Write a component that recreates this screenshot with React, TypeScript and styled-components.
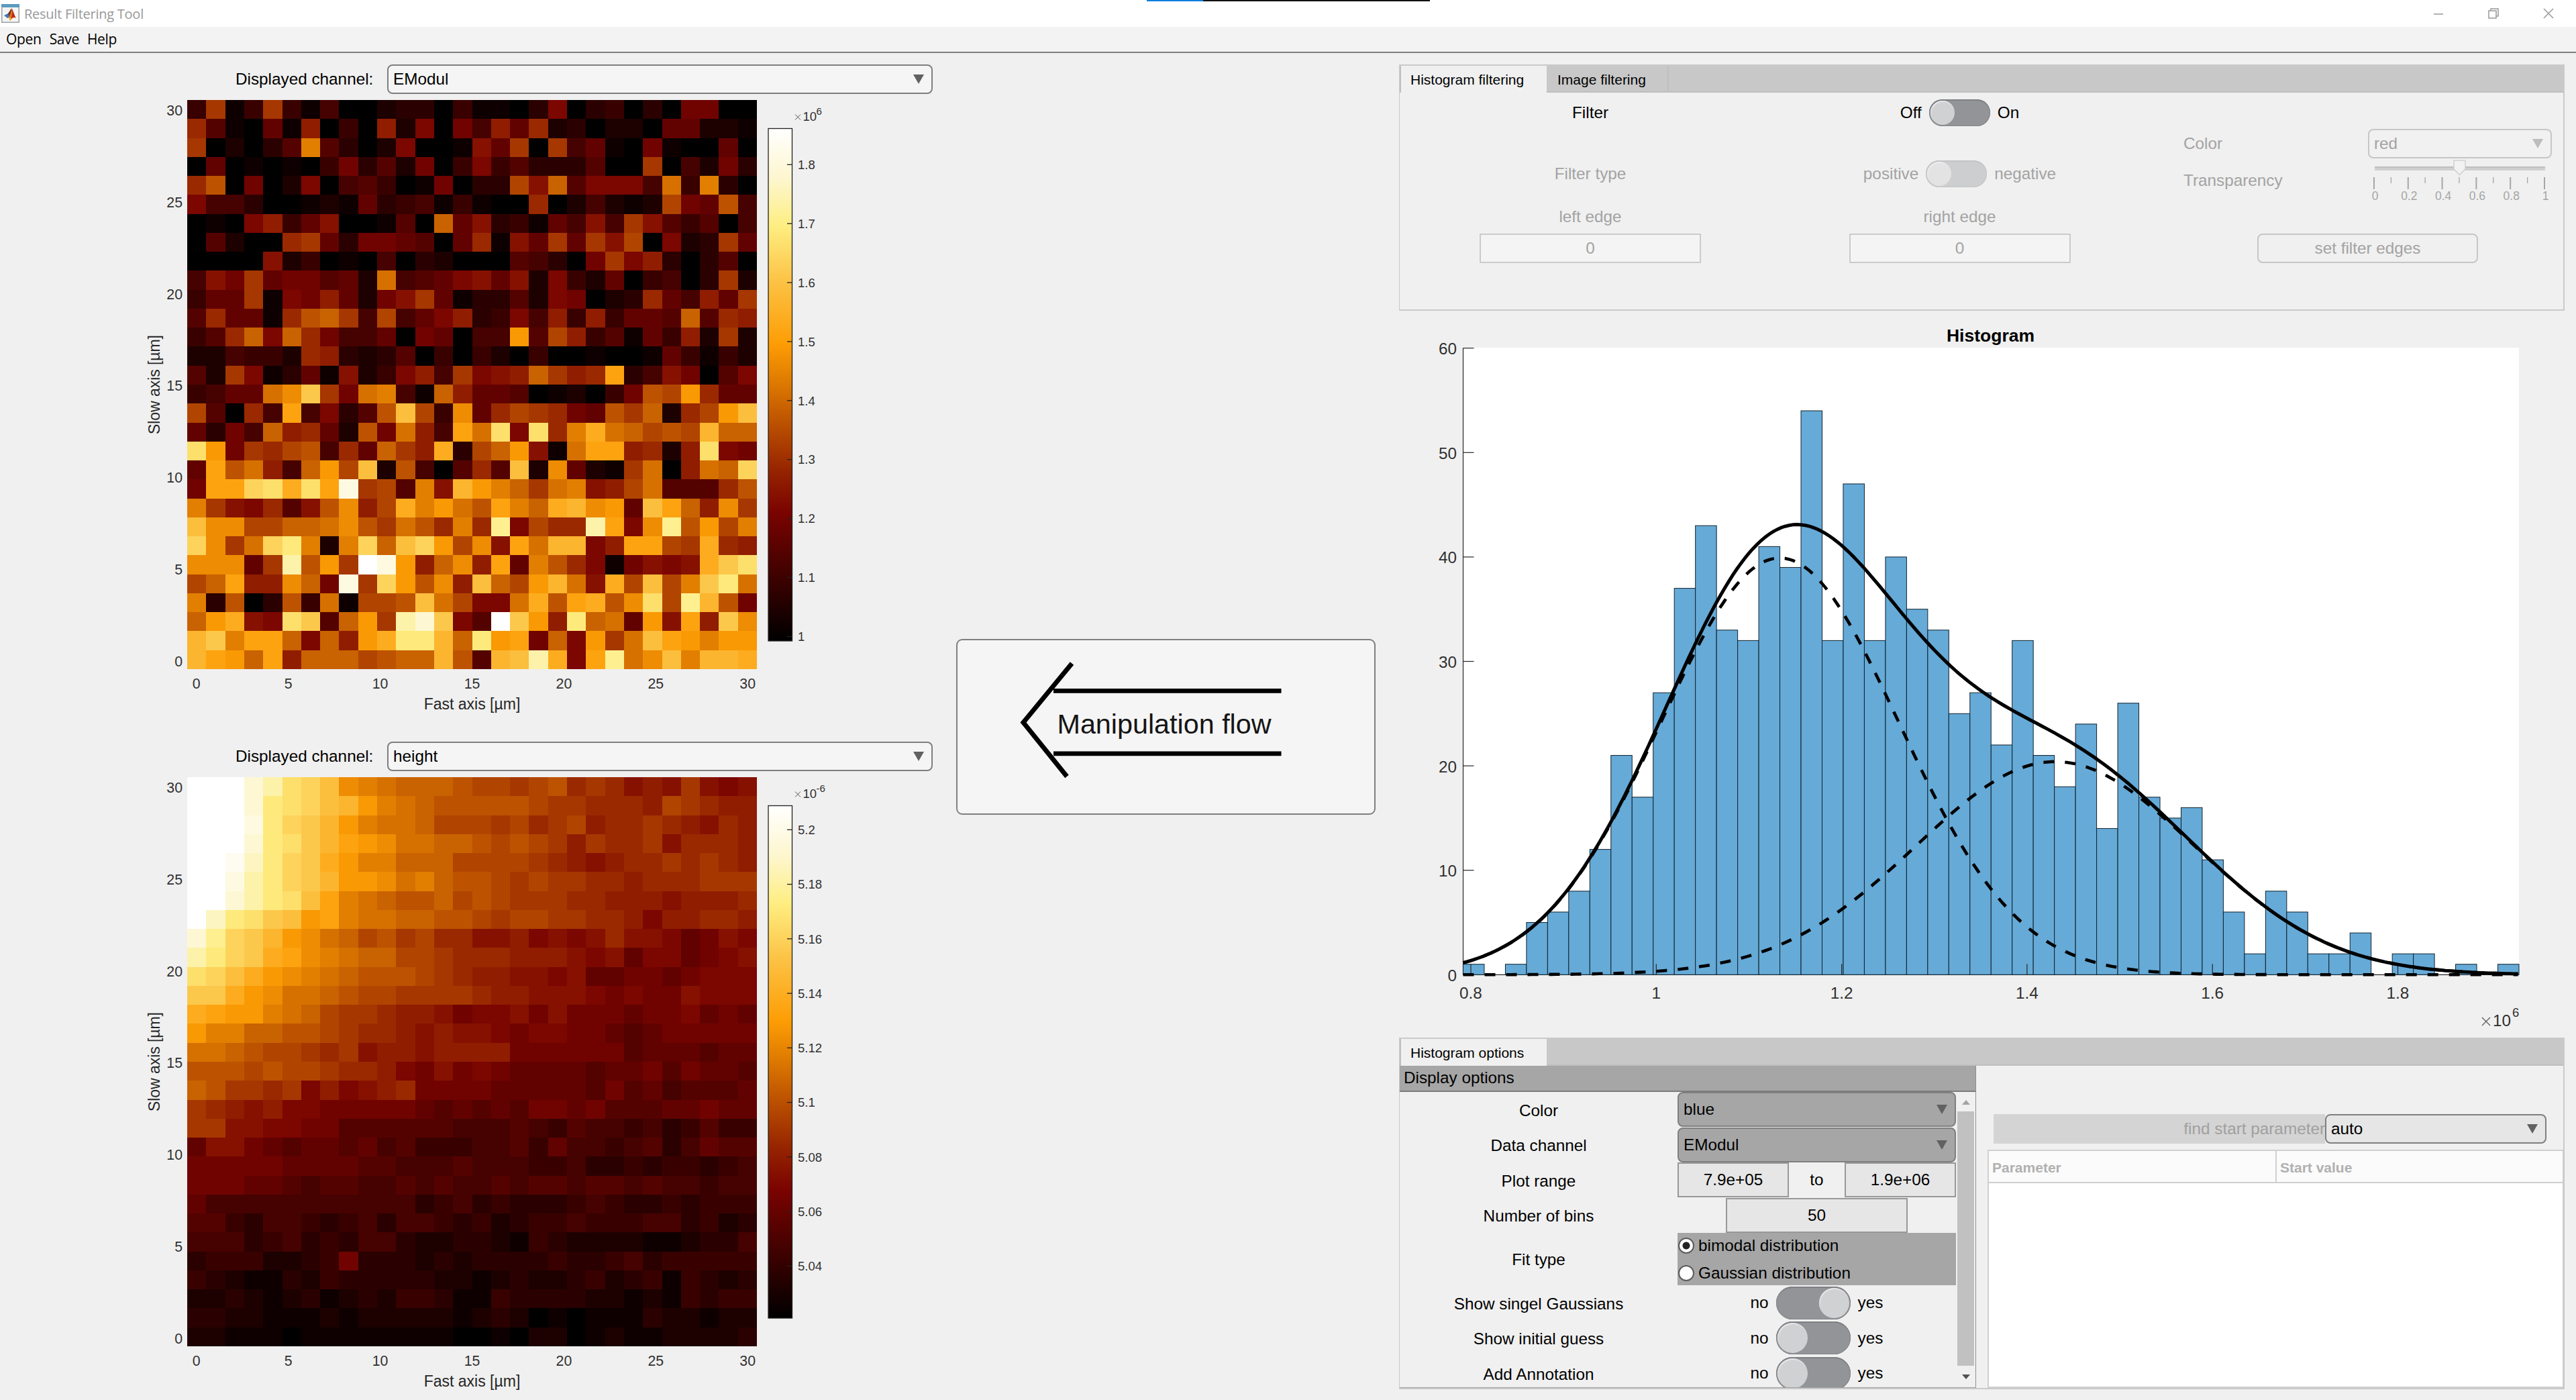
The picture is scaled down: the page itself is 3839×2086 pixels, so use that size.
import React from "react";
import styled, { createGlobalStyle } from "styled-components";

const SANS = '"Liberation Sans", Arial, Helvetica, sans-serif';
const SYSTEM = '"Open Sans", "Noto Sans", sans-serif';

const GlobalStyle = createGlobalStyle`
  * { box-sizing: border-box; }
  body { margin: 0; background: #f0f0f0; overflow: hidden; }
`;

/* ---------- data ---------- */

const EMODUL = [
  "4d14d4150023304110390340308800",
  "c61071b040b29085b7c23022077221",
  "d02036i63029001a7d0d5710810070",
  "070101048362804946333600d05283",
  "cf080290564018033eag69995h4i30",
  "955300121734514100c025212e87f5",
  "0109b47a00160g7a34175a5da64605",
  "06200cd73887607c1a7d7dae0923d7",
  "0000a24010503200065308d9b30360",
  "5a8d788672h5679a7a2942704503d2",
  "477d198b728ad71336298023c75b7d",
  "6c771cfgd5e579b3495b4b4776g6cb",
  "46cg9gc8557087055k6eb46174b2d2",
  "225442cb3236040420400100174142",
  "62d91371a249b5d9abgdbcl35a8069",
  "4577hjpd8hi51gb776012048fekc77",
  "e60c5l5936foe4j7cedc87fdg2ceko",
  "7385gbc72f8hb5lhr9rcimhgefengg",
  "rk8dcef5c7gdbm3egka1hllbc2br98",
  "7lfhb5gkeo2f506c6o2j721dh0bhgq",
  "8llqrmrlxde6iankigdhiabeh666cf",
  "ida9c6afjbemikhfligmnjk7olgbjd",
  "ojjeegghjfdhfcict9eccul9jtfkei",
  "qjdhqsi2iqgoqkejalhnn9blledmcb",
  "jjj7dufkdzxkbgjbl7ifc918a9ampr",
  "eglbbjg8xdqkfjbogeknhameoeipsh",
  "i3f03f4h1eefohe99hmflmfjretnf8",
  "gkma9rp6gkduwp96zpkbsgh7kalbpj",
  "npillg9gbkmssngskl8g9kdholkikk",
  "nlkglbgggefggnf6noum9lthjoinnm",
];

const HEIGHT = [
  "zzzwurqojihgggfeedefcdcabada9a",
  "zzzwsrqonkihgfffffeddcccbedcbb",
  "zzzxsqpnkihhgeeedecdebccdcbacb",
  "zzzwsrpnlkjhhggfefedbdccdacccb",
  "zzyvsqpmkiigggeeeedcbabccdcdcb",
  "zzxusqpnkkjhigffededdccbcccddd",
  "zzwusrolihgffgefedddccbbbabbbc",
  "zvsrpoklihhggffedeeddccb9bbccb",
  "wtqpnkjhgefdeccaab9a9acaa978a9",
  "usqpmljihggeedcccbbba9a799789a",
  "rqomkjihgfffedcbbaa9a778878999",
  "ppmkjhhgfeeddddcbbaaa98988a999",
  "mlkkihgeddcbba899a8a8887889787",
  "kiiggffedccbabaa98998876788888",
  "hhgfeedcdabbabbbb8888886777677",
  "fffefeedccb98a8987777677868776",
  "gfddcd9b9abc888877777686756667",
  "dcbab9988888767676887866677877",
  "ddaa99886666665556546554534644",
  "7aa876776756444556475545635766",
  "888887777665556555445334344345",
  "888776566556565565665665655455",
  "755555555555345343334543343444",
  "664355434535543423445444553423",
  "555345343553223321432222112335",
  "344422348333232333343345344444",
  "432113243333322123223423414323",
  "223212312324431143333221214344",
  "332211121222221232010111322122",
  "221110111111110010220121122223",
];

type Stop = [number, number, number, number];
const COLORMAP: Stop[] = [
  [0, 0, 0, 0],
  [0.25, 122, 3, 0],
  [0.333, 150, 36, 0],
  [0.45, 198, 94, 0],
  [0.5, 220, 120, 0],
  [0.58, 253, 157, 5],
  [0.7, 252, 194, 68],
  [0.81, 254, 238, 130],
  [0.9, 253, 246, 205],
  [1, 255, 255, 255],
];

function colorAt(t: number) {
  for (let i = 1; i < COLORMAP.length; i++) {
    const a = COLORMAP[i - 1];
    const b = COLORMAP[i];
    if (t <= b[0]) {
      const f = (t - a[0]) / (b[0] - a[0]);
      const mix = (k: 1 | 2 | 3) => Math.round(a[k] + (b[k] - a[k]) * f);
      return `rgb(${mix(1)},${mix(2)},${mix(3)})`;
    }
  }
  return "#fff";
}

const COUNTS = [
  1, 0, 1, 5, 6, 8, 12, 21, 17, 27, 37, 43, 33, 32, 41, 39, 54, 32, 47, 32, 40, 35, 33, 25, 27,
  22, 32, 21, 18, 24, 14, 26, 17, 15, 16, 11, 6, 2, 8, 6, 2, 2, 4, 0, 2, 2, 0, 1, 0, 1,
];

/* ---------- window chrome ---------- */

const Window = styled.div`
  position: relative;
  width: 3839px;
  height: 2086px;
  display: flex;
  flex-direction: column;
  background: #f0f0f0;
  font-family: ${SANS};
  font-size: 24.3px;
  line-height: 1;
  color: #000;
  overflow: hidden;
`;

const TitleBar = styled.header`
  height: 40px;
  flex: none;
  background: #fff;
  display: flex;
  align-items: center;
  padding: 0 0 0 2px;
  font-family: ${SYSTEM};
  font-size: 20px;
  letter-spacing: -0.25px;
  color: #999;
`;

const TitleText = styled.span`
  flex: 1;
  margin-left: 7px;
  padding-top: 2px;
`;

const TitleButtons = styled.div`
  display: flex;
`;

const TitleButton = styled.span`
  width: 82px;
  height: 40px;
  display: flex;
  align-items: center;
  justify-content: center;
`;

const LoadStrip = styled.div`
  position: absolute;
  top: 0;
  left: 1709px;
  width: 422px;
  height: 2px;
  background: linear-gradient(to right, #0a7fe0 0 84px, #111 84px);
`;

const MenuBar = styled.nav`
  height: 39px;
  flex: none;
  display: flex;
  align-items: center;
  gap: 12px;
  padding: 0 9px;
  background: #f3f3f3;
  border-bottom: 2px solid #7f7f7f;
  font-family: ${SYSTEM};
  font-size: 21px;
  letter-spacing: -0.3px;
`;

const Main = styled.main`
  flex: 1;
  min-height: 0;
  display: flex;
`;

/* ---------- left column ---------- */

const Plots = styled.section`
  width: 1425px;
  padding-top: 17px;
`;

const PlotPanel = styled.div`
  height: 1009px;
  display: flex;
  flex-direction: column;
`;

const ChannelRow = styled.div`
  display: flex;
  align-items: center;
  padding-left: 351px;
`;

const ChannelLabel = styled.label`
  width: 226px;
`;

const Select = styled.div<{ $w: number; $h?: number; $bg?: string; $dim?: boolean }>`
  width: ${(p) => p.$w}px;
  height: ${(p) => p.$h ?? 44}px;
  display: flex;
  align-items: center;
  justify-content: space-between;
  padding: 0 11px 0 7px;
  border: 2px solid ${(p) => (p.$dim ? "#c6c6c6" : "#7f7f7f")};
  border-radius: 8px;
  background: ${(p) => p.$bg ?? "#f5f5f5"};
  color: ${(p) => (p.$dim ? "#a3a3a3" : "#000")};
`;

const Caret = styled.i<{ $dim?: boolean }>`
  border: 8px solid transparent;
  border-top: 14px solid ${(p) => (p.$dim ? "#bdbdbd" : "#616161")};
  border-bottom: 0;
`;

const PlotSvg = styled.svg`
  display: block;
  margin-left: 200px;
  flex: none;
  overflow: visible;
  font-family: ${SANS};
`;

/* ---------- middle column ---------- */

const Middle = styled.section`
  width: 625px;
  padding-top: 873px;
`;

const FlowButton = styled.button`
  display: block;
  width: 625px;
  height: 262px;
  padding: 0;
  border: 2px solid #7f7f7f;
  border-radius: 9px;
  background: #f5f5f5;
  font-family: ${SANS};
`;

/* ---------- right column ---------- */

const Side = styled.section`
  width: 1737px;
  margin-left: 35px;
  padding-top: 17px;
  display: flex;
  flex-direction: column;
`;

const TabPanel = styled.div<{ $h: number }>`
  height: ${(p) => p.$h}px;
  flex: none;
  display: flex;
  flex-direction: column;
  border: 2px solid #cacaca;
  border-left-width: 1px;
`;

const TabStrip = styled.div`
  height: 40px;
  flex: none;
  display: flex;
  background: #c8c8c8;
  box-shadow: inset 0 -2px 0 #bfbfbf, inset 2px 0 0 #bfbfbf;
`;

const Tab = styled.div<{ $w: number; $active?: boolean }>`
  width: ${(p) => p.$w}px;
  padding: 1px 0 0 ${(p) => (p.$active ? 14 : 16)}px;
  margin-left: ${(p) => (p.$active ? 2 : 0)}px;
  display: flex;
  align-items: center;
  font-size: 21px;
  background: ${(p) => (p.$active ? "#f0f0f0" : "transparent")};
  border-right: ${(p) => (p.$active ? "0" : "2px solid #bfbfbf")};
`;

const FilterGrid = styled.div`
  display: grid;
  grid-template-columns: 568px 533px 1fr;
`;

const FilterColumn = styled.div`
  display: flex;
  flex-direction: column;
  align-items: center;
`;

const FilterLine = styled.div<{ $gap: number; $dim?: boolean }>`
  height: 40px;
  margin-top: ${(p) => p.$gap}px;
  display: flex;
  align-items: center;
  gap: 11px;
  color: ${(p) => (p.$dim ? "#a3a3a3" : "#000")};
`;

const Field = styled.div<{ $w: number; $h?: number; $dim?: boolean }>`
  width: ${(p) => p.$w}px;
  height: ${(p) => p.$h ?? 44}px;
  display: flex;
  align-items: center;
  justify-content: center;
  border: 2px solid ${(p) => (p.$dim ? "#cbcbcb" : "#989898")};
  background: ${(p) => (p.$dim ? "#f4f4f4" : "#e6e6e6")};
  color: ${(p) => (p.$dim ? "#a3a3a3" : "#000")};
`;

const EdgeField = styled(Field)`
  margin-top: 5px;
`;

const Track = styled.span<{ $w: number; $h: number; $on?: boolean; $dim?: boolean }>`
  width: ${(p) => p.$w}px;
  height: ${(p) => p.$h}px;
  flex: none;
  display: flex;
  justify-content: ${(p) => (p.$on ? "flex-end" : "flex-start")};
  border-radius: ${(p) => p.$h / 2}px;
  padding: 1px;
  background: ${(p) => (p.$dim ? "#cdced0" : "#939498")};
  box-shadow: inset 0 2px 0 ${(p) => (p.$dim ? "#c3c4c6" : "#7f8084")},
    inset 0 0 0 1px ${(p) => (p.$dim ? "#c3c4c6" : "#85868a")};
`;

const Knob = styled.span<{ $d: number; $dim?: boolean }>`
  width: ${(p) => p.$d}px;
  height: ${(p) => p.$d}px;
  margin: 1px;
  border-radius: 50%;
  background: ${(p) => (p.$dim ? "#e3e3e4" : "#d0d1d3")};
  box-shadow: inset 1px 2px 1px ${(p) => (p.$dim ? "#ececec" : "#e6e6e7")};
`;

const StyleColumn = styled.div`
  padding: 54px 17px 0 67px;
  color: #a3a3a3;
`;

const StyleLine = styled.div<{ $h: number }>`
  height: ${(p) => p.$h}px;
  display: flex;
  align-items: center;
  justify-content: space-between;
`;

const EdgesButton = styled.button`
  display: block;
  width: 329px;
  height: 44px;
  margin: 46px 0 0 110px;
  padding: 0;
  border: 2px solid #c6c6c6;
  border-radius: 8px;
  background: #f0f0f0;
  color: #a3a3a3;
  font: inherit;
`;

const HistSvg = styled.svg`
  display: block;
  flex: none;
  overflow: visible;
  font-family: ${SANS};
`;

const OptionsBody = styled.div`
  flex: 1;
  min-height: 0;
  display: flex;
  justify-content: space-between;
`;

const DisplayPanel = styled.div`
  width: 859px;
  display: flex;
  flex-direction: column;
  border-right: 1px solid #8f8f8f;
  border-bottom: 1px solid #a0a0a0;
  overflow: hidden;
`;

const DisplayHeader = styled.h2`
  height: 39px;
  flex: none;
  margin: 0 -1px 0 0;
  padding: 6px 0 0 6px;
  background: #a6a6a6;
  border-bottom: 2px solid #7d7d7d;
  font-size: 24.3px;
  font-weight: 400;
`;

const DisplayBody = styled.div`
  flex: 1;
  min-height: 0;
  display: flex;
  overflow: hidden;
`;

const OptionRows = styled.div`
  width: 829px;
`;

const OptionRow = styled.div<{ $h?: number }>`
  height: ${(p) => p.$h ?? 52.5}px;
  display: grid;
  grid-template-columns: 414px 415px;
  align-items: center;
`;

const OptionLabel = styled.label`
  text-align: center;
  padding-top: 3px;
`;

const OptionCell = styled.div<{ $gap?: number }>`
  display: flex;
  align-items: center;
  justify-content: center;
  gap: ${(p) => p.$gap ?? 0}px;
`;

const RangeWord = styled.span`
  flex: 1;
  text-align: center;
`;

const RadioBox = styled.div`
  height: 78px;
  background: #a6a6a6;
  display: flex;
  flex-direction: column;
  justify-content: space-between;
  padding: 7px 0 6px 1px;
`;

const RadioLine = styled.div`
  display: flex;
  align-items: center;
  gap: 6px;
`;

const Radio = styled.i<{ $on?: boolean }>`
  width: 24px;
  height: 24px;
  border-radius: 50%;
  border: 2px solid #5c5c5c;
  background: ${(p) => (p.$on ? "radial-gradient(circle, #222 0 5px, #fff 6px)" : "#fff")};
`;

const ScrollBar = styled.div`
  width: 29px;
  display: flex;
  flex-direction: column;
  align-items: center;
  padding: 12px 0 12px 0;
`;

const ScrollArrow = styled.i<{ $down?: boolean }>`
  border: 6px solid transparent;
  ${(p) =>
    p.$down
      ? "border-top: 7px solid #505050; border-bottom: 0;"
      : "border-bottom: 7px solid #a3a3a3; border-top: 0;"}
`;

const ScrollThumb = styled.div`
  width: 25px;
  height: 379px;
  margin: 10px 0 auto;
  background: #c1c1c1;
`;

const StartPanel = styled.div`
  width: 858px;
  padding-top: 72px;
  display: flex;
  flex-direction: column;
`;

const StartRow = styled.div`
  height: 44px;
  margin: 0 25px 9px 9px;
  display: flex;
`;

const StartLabel = styled.div`
  flex: 1;
  display: flex;
  align-items: center;
  justify-content: flex-end;
  background: #d4d4d4;
  color: #a0a0a0;
`;

const StartTable = styled.div`
  flex: 1;
  border: 2px solid #d0d0d0;
  border-right-width: 1px;
  background: #fff;
`;

const StartHead = styled.div`
  height: 48px;
  display: grid;
  grid-template-columns: 429px 1fr;
  background: #fbfbfb;
  border-bottom: 2px solid #cfcfcf;
`;

const HeadCell = styled.div`
  display: flex;
  align-items: center;
  padding: 3px 0 0 5px;
  font-size: 21px;
  font-weight: 700;
  color: #b0b0b0;
  border-right: 2px solid #d0d0d0;
  &:last-child {
    border-right: 0;
  }
`;

/* ---------- drawings ---------- */

const AppLogo = () => (
  <svg width="27" height="28" viewBox="0 0 27 28">
    <rect x="0.75" y="0.75" width="25.5" height="26.5" fill="#f4f4f4" stroke="#9aa0a4" strokeWidth="1.5" />
    <rect x="0" y="0" width="27" height="5" fill="#5b9bc0" />
    <path d="M4 17 L10 14 L13 19 L9 21 Z" fill="#3c78b4" />
    <path d="M10 14 C12 12 14 7 15.5 6.5 L14 20 L11.5 18 Z" fill="#6c2a1c" />
    <path d="M15.5 6.5 C17.5 9 19 17 22 21 C19 19.5 17 20 13 25 L11 19 C13.5 16 14.5 10 15.5 6.5 Z" fill="#e2701e" />
    <path d="M15.5 6.5 C17 11 17 16 14 23 C15 20 19 18 22 21 C19 17 17.5 9 15.5 6.5 Z" fill="#b3261a" />
    <path d="M10.5 20 L13 25 L15 21 Z" fill="#f3b32b" />
  </svg>
);

interface HeatmapProps {
  id: string;
  rows: string[];
  exponent: string;
  ticks: { label: string; y: number }[];
}

const MAP_X = 79;
const MAP_Y = 9;
const MAP_W = 849;
const MAP_H = 848;

const Heatmap = ({ id, rows, exponent, ticks }: HeatmapProps) => {
  const cw = MAP_W / 30;
  const ch = MAP_H / 30;
  const marks = [0, 5, 10, 15, 20, 25, 30];
  return (
    <PlotSvg width="1060" height="930">
      <defs>
        <linearGradient id={id} x1="0" y1="1" x2="0" y2="0">
          {COLORMAP.map(([t, r, g, b]) => (
            <stop key={t} offset={t} stopColor={`rgb(${r},${g},${b})`} />
          ))}
        </linearGradient>
      </defs>
      <g shapeRendering="crispEdges">
        {rows.map((row, j) =>
          [...row].map((c, i) => {
            const left = Math.round(MAP_X + i * cw);
            const top = Math.round(MAP_Y + j * ch);
            return (
              <rect
                key={`${i}-${j}`}
                x={left}
                y={top}
                width={Math.round(MAP_X + (i + 1) * cw) - left}
                height={Math.round(MAP_Y + (j + 1) * ch) - top}
                fill={colorAt(parseInt(c, 36) / 35)}
              />
            );
          }),
        )}
      </g>
      <g fontSize="21.3" fill="#303030">
        {marks.map((m) => (
          <text key={`y${m}`} x="72" y={MAP_Y + MAP_H - 4.5 - m * 27.35} textAnchor="end">
            {m}
          </text>
        ))}
        {marks.map((m) => (
          <text key={`x${m}`} x={92.8 + m * 27.38} y={MAP_Y + MAP_H + 29} textAnchor="middle">
            {m}
          </text>
        ))}
      </g>
      <g fontSize="23" fill="#262626">
        <text x="503.5" y={MAP_Y + MAP_H + 59.5} textAnchor="middle">Fast axis [µm]</text>
        <text transform={`translate(38 ${MAP_Y + MAP_H / 2}) rotate(-90)`} textAnchor="middle" textLength="148">
          Slow axis [µm]
        </text>
      </g>
      <rect x="945" y="51.5" width="35.5" height="763.5" fill={`url(#${id})`} stroke="#222" strokeWidth="1.3" />
      <g fontSize="18.5" fill="#303030">
        {ticks.map((t) => (
          <g key={t.label}>
            <line x1="973" x2="980" y1={t.y} y2={t.y} stroke="#222" strokeWidth="1.3" />
            <text x="989" y={t.y + 6.7}>{t.label}</text>
          </g>
        ))}
      </g>
      <g fill="#303030">
        <path d="M985 30.5 l8 8 m0 -8 l-8 8" stroke="#555" strokeWidth="1" fill="none" />
        <text x="996.5" y="39.5" fontSize="18.5">10</text>
        <text x="1016.5" y="30.5" fontSize="15">{exponent}</text>
      </g>
    </PlotSvg>
  );
};

const FlowArrow = () => (
  <svg width="621" height="258" viewBox="1427 954 621 258">
    <path d="M1597.5 988.5 L1525 1076.5 L1590 1157" fill="none" stroke="#000" strokeWidth="7" />
    <path d="M1570 1029.3 H1909.5 M1570 1122.8 H1909.5" stroke="#000" strokeWidth="6.7" />
    <text x="1575.5" y="1092.5" fontSize="41.3" fill="#151515">Manipulation flow</text>
  </svg>
);

const Slider = () => (
  <svg width="274" height="66" viewBox="3529 236 274 66" fontFamily={SANS}>
    <rect x="3539" y="248" width="254" height="6" fill="#cfcfcf" />
    <rect x="3539" y="248" width="254" height="2" fill="#bfbfbf" />
    <path d="M3657 239 h17 v13 l-8.5 8.5 l-8.5 -8.5 z" fill="#f2f2f2" stroke="#cfcfcf" strokeWidth="1.5" />
    {Array.from({ length: 11 }, (_, i) => (
      <line
        key={i}
        x1={3538 + i * 25.4}
        x2={3538 + i * 25.4}
        y1="264"
        y2={i % 2 ? 273 : 282}
        stroke="#a6a6a6"
        strokeWidth={i % 2 ? 1.3 : 2}
      />
    ))}
    {["0", "0.2", "0.4", "0.6", "0.8", "1"].map((t, i) => (
      <text key={t} x={3539.5 + i * 50.8} y="298" fontSize="17.5" textAnchor="middle" fill="#a6a6a6">
        {t}
      </text>
    ))}
  </svg>
);

const HX0 = 2180.5;
const HX1 = 3754;
const HY0 = 1452.3;
const UNIT = 15.56;
const BIN = (HX1 - HX0) / COUNTS.length;

const gauss = (peak: number, mean: number, sigma: number) => (x: number) =>
  peak * Math.exp(-0.5 * ((x - mean) / sigma) ** 2);
const first = gauss(39.9, 2652.5, 177);
const second = gauss(20.4, 3063, 207);

function curve(f: (x: number) => number) {
  const points: string[] = [];
  for (let x = HX0; x <= HX1; x += 6) points.push(`${x.toFixed(1)} ${(HY0 - f(x) * UNIT).toFixed(1)}`);
  return `M${points.join("L")}`;
}

const Histogram = () => (
  <HistSvg width="1737" height="1083" viewBox="2085 463 1737 1083">
    <text x="2966.5" y="508.5" fontSize="26.5" fontWeight="700" textAnchor="middle">Histogram</text>
    <rect x={HX0} y="518" width={HX1 - HX0} height={HY0 - 518} fill="#fff" />
    <path d={`M${HX0} 518.5 V${HY0} H${HX1}`} fill="none" stroke="#262626" strokeWidth="1.2" />
    {COUNTS.map((n, i) =>
      n ? (
        <rect
          key={i}
          x={HX0 + i * BIN}
          y={HY0 - n * UNIT}
          width={BIN}
          height={n * UNIT}
          fill="#66aad7"
          stroke="#10222e"
          strokeWidth="1"
        />
      ) : null,
    )}
    <g stroke="#262626" strokeWidth="1.2">
      {[10, 20, 30, 40, 50, 60].map((n) => (
        <line key={n} x1={HX0} x2={HX0 + 16} y1={HY0 - n * UNIT} y2={HY0 - n * UNIT} />
      ))}
      {[0, 1, 2, 3, 4, 5].map((n) => (
        <line key={n} x1={2192 + n * 276.3} x2={2192 + n * 276.3} y1={HY0} y2={HY0 - 16} />
      ))}
    </g>
    <g fill="none" stroke="#000" strokeWidth="4.6">
      <path d={curve((x) => first(x) + second(x))} strokeWidth="5" />
      <path d={curve(first)} strokeDasharray="16 16" />
      <path d={curve(second)} strokeDasharray="16 16" />
    </g>
    <g fontSize="24.3" fill="#303030">
      {[0, 10, 20, 30, 40, 50, 60].map((n) => (
        <text key={n} x="2171" y={HY0 - n * UNIT + 9.5} textAnchor="end">{n}</text>
      ))}
      {["0.8", "1", "1.2", "1.4", "1.6", "1.8"].map((t, i) => (
        <text key={t} x={2192 + i * 276.3} y="1488" textAnchor="middle">{t}</text>
      ))}
      <path d="M3699 1516 l12 12 m0 -12 l-12 12" stroke="#555" strokeWidth="1.2" />
      <text x="3715" y="1528.5">10</text>
      <text x="3744" y="1514.5" fontSize="18.5">6</text>
    </g>
  </HistSvg>
);

interface SwitchProps {
  off: string;
  on: string;
  w?: number;
  h?: number;
  checked?: boolean;
  dim?: boolean;
}

const Switch = ({ off, on, w = 91, h = 40, checked, dim }: SwitchProps) => (
  <>
    <span>{off}</span>
    <Track $w={w} $h={h} $on={checked} $dim={dim}>
      <Knob $d={h - 4} $dim={dim} />
    </Track>
    <span>{on}</span>
  </>
);

const EMODUL_TICKS = ["1.8", "1.7", "1.6", "1.5", "1.4", "1.3", "1.2", "1.1", "1"].map((label, i) => ({
  label,
  y: 105.3 + i * 87.88,
}));

const HEIGHT_TICKS = ["5.2", "5.18", "5.16", "5.14", "5.12", "5.1", "5.08", "5.06", "5.04"].map((label, i) => ({
  label,
  y: 87.3 + i * 81.26,
}));

export default function App() {
  return (
    <>
      <GlobalStyle />
      <Window>
        <LoadStrip />
        <TitleBar>
          <AppLogo />
          <TitleText>Result Filtering Tool</TitleText>
          <TitleButtons>
            <TitleButton>
              <svg width="14" height="14" viewBox="0 0 14 14">
                <path d="M0 8 H14" stroke="#999" strokeWidth="1.5" />
              </svg>
            </TitleButton>
            <TitleButton>
              <svg width="16" height="16" viewBox="0 0 16 16" fill="none" stroke="#999" strokeWidth="1.5">
                <rect x="1" y="4" width="11" height="11" />
                <path d="M4 4 V1 H15 V12 H12" />
              </svg>
            </TitleButton>
            <TitleButton>
              <svg width="16" height="16" viewBox="0 0 16 16">
                <path d="M1 1 L15 15 M15 1 L1 15" stroke="#999" strokeWidth="1.5" />
              </svg>
            </TitleButton>
          </TitleButtons>
        </TitleBar>
        <MenuBar>
          <span>Open</span>
          <span>Save</span>
          <span>Help</span>
        </MenuBar>
        <Main>
          <Plots>
            <PlotPanel>
              <ChannelRow>
                <ChannelLabel>Displayed channel:</ChannelLabel>
                <Select $w={813}>
                  EModul
                  <Caret />
                </Select>
              </ChannelRow>
              <Heatmap id="emodulScale" rows={EMODUL} exponent="6" ticks={EMODUL_TICKS} />
            </PlotPanel>
            <PlotPanel>
              <ChannelRow>
                <ChannelLabel>Displayed channel:</ChannelLabel>
                <Select $w={813}>
                  height
                  <Caret />
                </Select>
              </ChannelRow>
              <Heatmap id="heightScale" rows={HEIGHT} exponent="-6" ticks={HEIGHT_TICKS} />
            </PlotPanel>
          </Plots>
          <Middle>
            <FlowButton>
              <FlowArrow />
            </FlowButton>
          </Middle>
          <Side>
            <TabPanel $h={367}>
              <TabStrip>
                <Tab $w={217} $active>Histogram filtering</Tab>
                <Tab $w={182}>Image filtering</Tab>
              </TabStrip>
              <FilterGrid>
                <FilterColumn>
                  <FilterLine $gap={10}>Filter</FilterLine>
                  <FilterLine $gap={51} $dim>Filter type</FilterLine>
                  <FilterLine $gap={24} $dim>left edge</FilterLine>
                  <EdgeField $w={330} $dim>0</EdgeField>
                </FilterColumn>
                <FilterColumn>
                  <FilterLine $gap={10}>
                    <Switch off="Off" on="On" />
                  </FilterLine>
                  <FilterLine $gap={51} $dim>
                    <Switch off="positive" on="negative" dim />
                  </FilterLine>
                  <FilterLine $gap={24} $dim>right edge</FilterLine>
                  <EdgeField $w={330} $dim>0</EdgeField>
                </FilterColumn>
                <StyleColumn>
                  <StyleLine $h={44}>
                    Color
                    <Select $w={274} $bg="#f1f1f1" $dim>
                      red
                      <Caret $dim />
                    </Select>
                  </StyleLine>
                  <StyleLine $h={66}>
                    Transparency
                    <Slider />
                  </StyleLine>
                  <EdgesButton>set filter edges</EdgesButton>
                </StyleColumn>
              </FilterGrid>
            </TabPanel>
            <Histogram />
            <TabPanel $h={524}>
              <TabStrip>
                <Tab $w={217} $active>Histogram options</Tab>
              </TabStrip>
              <OptionsBody>
                <DisplayPanel>
                  <DisplayHeader>Display options</DisplayHeader>
                  <DisplayBody>
                    <OptionRows>
                      <OptionRow>
                        <OptionLabel>Color</OptionLabel>
                        <Select $w={415} $h={52} $bg="#a6a6a6">
                          blue
                          <Caret />
                        </Select>
                      </OptionRow>
                      <OptionRow>
                        <OptionLabel>Data channel</OptionLabel>
                        <Select $w={415} $h={52} $bg="#a6a6a6">
                          EModul
                          <Caret />
                        </Select>
                      </OptionRow>
                      <OptionRow>
                        <OptionLabel>Plot range</OptionLabel>
                        <OptionCell>
                          <Field $w={166} $h={52}>7.9e+05</Field>
                          <RangeWord>to</RangeWord>
                          <Field $w={166} $h={52}>1.9e+06</Field>
                        </OptionCell>
                      </OptionRow>
                      <OptionRow>
                        <OptionLabel>Number of bins</OptionLabel>
                        <OptionCell>
                          <Field $w={271} $h={52}>50</Field>
                        </OptionCell>
                      </OptionRow>
                      <OptionRow $h={78}>
                        <OptionLabel>Fit type</OptionLabel>
                        <RadioBox>
                          <RadioLine>
                            <Radio $on />
                            bimodal distribution
                          </RadioLine>
                          <RadioLine>
                            <Radio />
                            Gaussian distribution
                          </RadioLine>
                        </RadioBox>
                      </OptionRow>
                      <OptionRow>
                        <OptionLabel>Show singel Gaussians</OptionLabel>
                        <OptionCell $gap={11}>
                          <Switch off="no" on="yes" w={111} h={49} checked />
                        </OptionCell>
                      </OptionRow>
                      <OptionRow>
                        <OptionLabel>Show initial guess</OptionLabel>
                        <OptionCell $gap={11}>
                          <Switch off="no" on="yes" w={111} h={49} />
                        </OptionCell>
                      </OptionRow>
                      <OptionRow>
                        <OptionLabel>Add Annotation</OptionLabel>
                        <OptionCell $gap={11}>
                          <Switch off="no" on="yes" w={111} h={49} />
                        </OptionCell>
                      </OptionRow>
                    </OptionRows>
                    <ScrollBar>
                      <ScrollArrow />
                      <ScrollThumb />
                      <ScrollArrow $down />
                    </ScrollBar>
                  </DisplayBody>
                </DisplayPanel>
                <StartPanel>
                  <StartRow>
                    <StartLabel>find start parameter</StartLabel>
                    <Select $w={330} $bg="#e6e6e6">
                      auto
                      <Caret />
                    </Select>
                  </StartRow>
                  <StartTable>
                    <StartHead>
                      <HeadCell>Parameter</HeadCell>
                      <HeadCell>Start value</HeadCell>
                    </StartHead>
                  </StartTable>
                </StartPanel>
              </OptionsBody>
            </TabPanel>
          </Side>
        </Main>
      </Window>
    </>
  );
}
